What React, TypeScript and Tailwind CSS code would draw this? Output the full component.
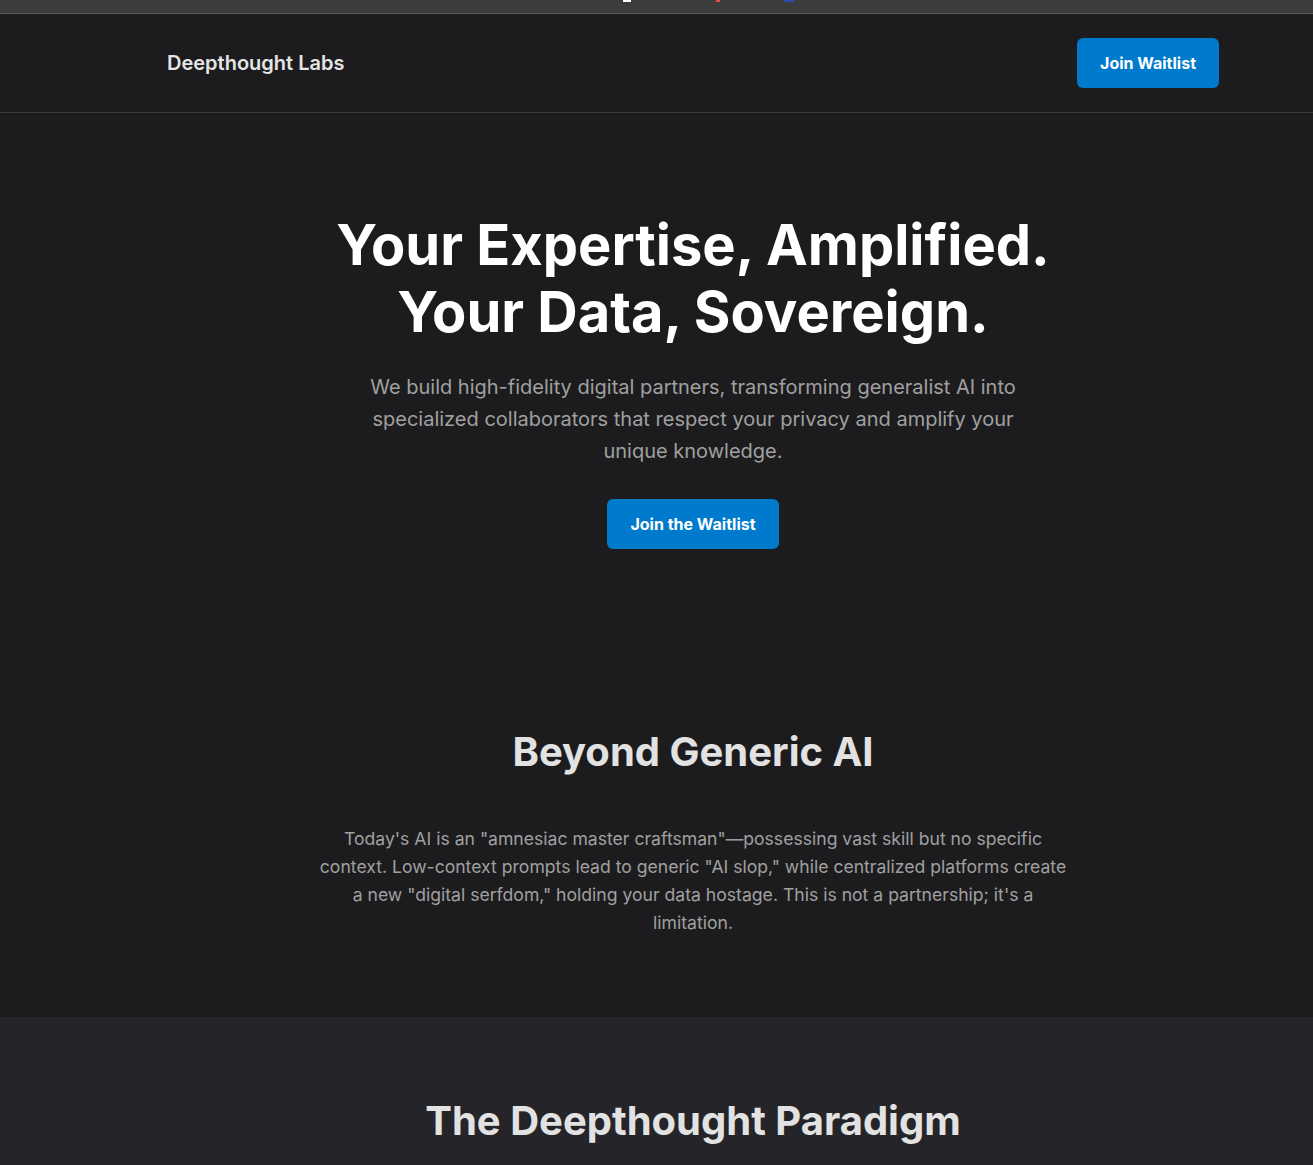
import React from "react";

export default function App() {
  return (
    <div className="w-full min-h-screen overflow-hidden bg-[#1c1c1e] font-['Inter',sans-serif]">
      <div className="w-[1386px]">
        {/* top chrome strip */}
        <div className="h-[13px] bg-[#3c3c3c] border-b border-[#5a5a5a] box-content relative">
          <span className="absolute left-[623px] top-0 w-[8px] h-[2px] bg-white" />
          <span className="absolute left-[716px] top-0 w-[4px] h-[2px] bg-[#e05252]" />
          <span className="absolute left-[784px] top-0 w-[10px] h-[2px] bg-[#2a4da8]" />
        </div>

        {/* header */}
        <header className="border-b border-[#3a3a3c]">
          <div className="mx-auto max-w-[1100px] px-6 py-6 flex items-center justify-between">
            <span className="text-[20px] font-semibold text-[#e5e5e5] leading-[28px]">
              Deepthought Labs
            </span>
            <button className="h-[50px] px-[23px] rounded-md bg-[#007acc] text-white text-[16px] font-bold">
              Join Waitlist
            </button>
          </div>
        </header>

        {/* hero */}
        <section className="pt-[99px] pb-[100px] flex flex-col items-center text-center">
          <h1 className="text-[56px] leading-[66.7px] font-bold text-white">
            Your Expertise, Amplified.
            <br />
            Your Data, Sovereign.
          </h1>
          <p className="mt-[26px] max-w-2xl text-[20px] leading-[32px] text-[#a0a0a0]">
            We build high-fidelity digital partners, transforming generalist AI
            into specialized collaborators that respect your privacy and amplify
            your unique knowledge.
          </p>
          <button className="mt-[32px] h-[50px] px-[23px] rounded-md bg-[#007acc] text-white text-[16px] font-bold">
            Join the Waitlist
          </button>
        </section>

        {/* beyond generic */}
        <section className="pt-[79px] pb-20 flex flex-col items-center text-center">
          <h2 className="text-[40px] leading-[48px] font-bold text-[#e2e2e2]">
            Beyond Generic AI
          </h2>
          <p className="mt-[49px] max-w-[752px] text-[17.6px] leading-[28px] text-[#a0a0a0]">
            Today's AI is an "amnesiac master craftsman"—possessing vast skill
            but no specific context. Low-context prompts lead to generic "AI
            slop," while centralized platforms create a new "digital serfdom,"
            holding your data hostage. This is not a partnership; it's a
            limitation.
          </p>
        </section>
      </div>

      {/* paradigm */}
      <section className="bg-[#252529] w-full">
        <div className="w-[1386px] pt-20 pb-20 flex flex-col items-center text-center">
          <h2 className="text-[40px] leading-[48px] font-bold text-[#e2e2e2]">
            The Deepthought Paradigm
          </h2>
          <div className="h-[200px]" />
        </div>
      </section>
    </div>
  );
}
